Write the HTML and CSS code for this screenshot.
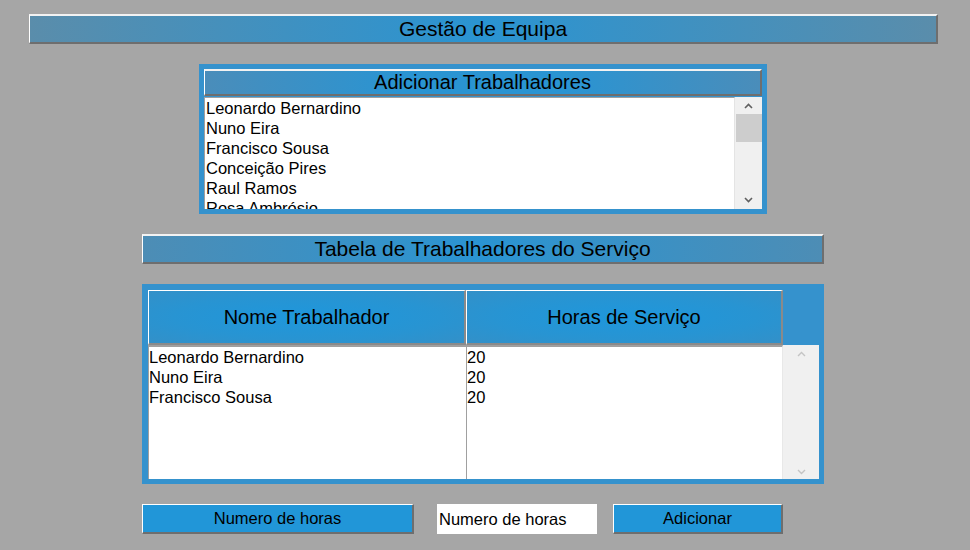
FILE: index.html
```html
<!DOCTYPE html>
<html lang="pt">
<head>
<meta charset="utf-8">
<title>Gestão de Equipa</title>
<link rel="stylesheet" href="styles.css">
</head>
<body>
<div class="page">
  <div class="bar title-bar">Gestão de Equipa</div>

  <div class="panel add-panel">
    <div class="bar add-header">Adicionar Trabalhadores</div>
    <div class="listbox">
      <div class="list-items">
        <div class="item">Leonardo Bernardino</div>
        <div class="item">Nuno Eira</div>
        <div class="item">Francisco Sousa</div>
        <div class="item">Conceição Pires</div>
        <div class="item">Raul Ramos</div>
        <div class="item">Rosa Ambrósio</div>
      </div>
      <div class="scrollbar active">
        <svg class="arrow" width="9" height="6" viewBox="0 0 9 6"><path d="M1 5 L4.5 1.5 L8 5" fill="none" stroke="#606060" stroke-width="1.6"/></svg>
        <div class="track"><div class="thumb"></div></div>
        <svg class="arrow" width="9" height="6" viewBox="0 0 9 6"><path d="M1 1 L4.5 4.5 L8 1" fill="none" stroke="#606060" stroke-width="1.6"/></svg>
      </div>
    </div>
  </div>

  <div class="bar table-bar">Tabela de Trabalhadores do Serviço</div>

  <div class="panel table-panel">
    <div class="thead">
      <div class="th th-name">Nome Trabalhador</div>
      <div class="th th-hours">Horas de Serviço</div>
    </div>
    <div class="tbody">
      <div class="col col-name">
        <div class="item">Leonardo Bernardino</div>
        <div class="item">Nuno Eira</div>
        <div class="item">Francisco Sousa</div>
      </div>
      <div class="col col-hours">
        <div class="item">20</div>
        <div class="item">20</div>
        <div class="item">20</div>
      </div>
      <div class="scrollbar disabled">
        <svg class="arrow" width="9" height="6" viewBox="0 0 9 6"><path d="M1 5 L4.5 1.5 L8 5" fill="none" stroke="#c4c4c4" stroke-width="1.4"/></svg>
        <div class="track"></div>
        <svg class="arrow" width="9" height="6" viewBox="0 0 9 6"><path d="M1 1 L4.5 4.5 L8 1" fill="none" stroke="#c4c4c4" stroke-width="1.4"/></svg>
      </div>
    </div>
  </div>

  <div class="actions">
    <div class="btn btn-label">Numero de horas</div>
    <div class="input">Numero de horas</div>
    <div class="btn btn-add">Adicionar</div>
  </div>
</div>
</body>
</html>
```
FILE: styles.css
```css
* { box-sizing: border-box; }

html, body {
  margin: 0;
  padding: 0;
  background: #a6a6a6;
}

body {
  font-family: "Liberation Sans", Arial, sans-serif;
  color: #000;
}

.page {
  padding-top: 14px;
  display: flex;
  flex-direction: column;
  align-items: flex-start;
}

.bar {
  background: linear-gradient(to right, #5a8dab 0%, #2a94d2 50%, #5a8dab 100%);
  border-top: 2px solid #f2f2f2;
  border-left: 1px solid #ffffff;
  border-bottom: 2px solid #6e6e6e;
  border-right: 2px solid #6e6e6e;
  display: flex;
  align-items: center;
  justify-content: center;
}

.title-bar {
  margin-left: 29px;
  width: 909px;
  height: 30px;
  font-size: 21px;
}

.panel {
  background: #3592cd;
}

.add-panel {
  margin-top: 20px;
  margin-left: 199px;
  width: 568px;
  height: 150px;
  padding: 5px;
  display: flex;
  flex-direction: column;
  gap: 1px;
}

.add-header {
  height: 27px;
  font-size: 20px;
  background: linear-gradient(to right, #4a8dba 0%, #2a94d2 35%, #2a94d2 65%, #4a8dba 100%);
}

.listbox {
  height: 112px;
  display: flex;
  background: #fff;
}

.list-items {
  flex: 1;
  overflow: hidden;
  border-top: 1px solid #a0a0a0;
  border-left: 1px solid #a0a0a0;
  border-right: 1px solid #e4e4e4;
  padding-left: 1px;
  font-size: 16.5px;
  line-height: 20px;
}

.item {
  white-space: nowrap;
}

.scrollbar {
  background: #f0f0f0;
  display: flex;
  flex-direction: column;
  align-items: center;
}

.scrollbar .arrow {
  flex: none;
}

.scrollbar.active {
  width: 27px;
  padding: 6px 0 6px;
}

.scrollbar.active .track {
  flex: 1;
  width: 100%;
  padding-top: 5px;
}

.scrollbar.active .thumb {
  margin-left: 1px;
  height: 28px;
  background: #cdcdcd;
}

.table-bar {
  margin-top: 20px;
  margin-left: 142px;
  width: 682px;
  height: 30px;
  font-size: 21px;
  background: linear-gradient(to right, #4d8db5 0%, #2a94d2 50%, #4d8db5 100%);
}

.table-panel {
  margin-top: 20px;
  margin-left: 142px;
  width: 682px;
  height: 200px;
  padding: 6px 5px 5px 6px;
  display: flex;
  flex-direction: column;
}

.thead {
  display: flex;
  height: 55px;
  flex: none;
}

.th {
  height: 55px;
  border-top: 1px solid #ffffff;
  border-left: 1px solid #ffffff;
  border-bottom: 2px solid #8a8a8a;
  border-right: 2px solid #8a8a8a;
  background: radial-gradient(ellipse at center, #1e97dc 0%, #2894d2 60%, #3390c8 100%);
  display: flex;
  align-items: center;
  justify-content: center;
  font-size: 20px;
}

.th-name { width: 318px; }
.th-hours { width: 317px; }

.tbody {
  flex: 1;
  display: flex;
  background: #fff;
  min-height: 0;
}

.col {
  border-top: 2px solid #a0a0a0;
  border-left: 1px solid #a0a0a0;
  font-size: 16.5px;
  line-height: 20px;
  padding-left: 0;
}

.col-name { width: 318px; }
.col-hours { width: 317px; border-right: 1px solid #e8e8e8; }

.scrollbar.disabled {
  flex: 1;
  justify-content: space-between;
  padding: 6px 0 4px;
}

.actions {
  margin-left: 142px;
  margin-top: 20px;
  display: flex;
  align-items: flex-start;
  font-size: 16.5px;
}

.btn {
  height: 30px;
  background: #2196d8;
  border-top: 1px solid #ffffff;
  border-left: 1px solid #ffffff;
  border-bottom: 2px solid #6e6e6e;
  border-right: 2px solid #6e6e6e;
  display: flex;
  align-items: center;
  justify-content: center;
}

.btn-label { width: 272px; }

.input {
  margin-left: 23px;
  width: 160px;
  height: 30px;
  background: #fff;
  padding-left: 2px;
  display: flex;
  align-items: center;
}

.btn-add {
  margin-left: 16px;
  width: 170px;
}
```
